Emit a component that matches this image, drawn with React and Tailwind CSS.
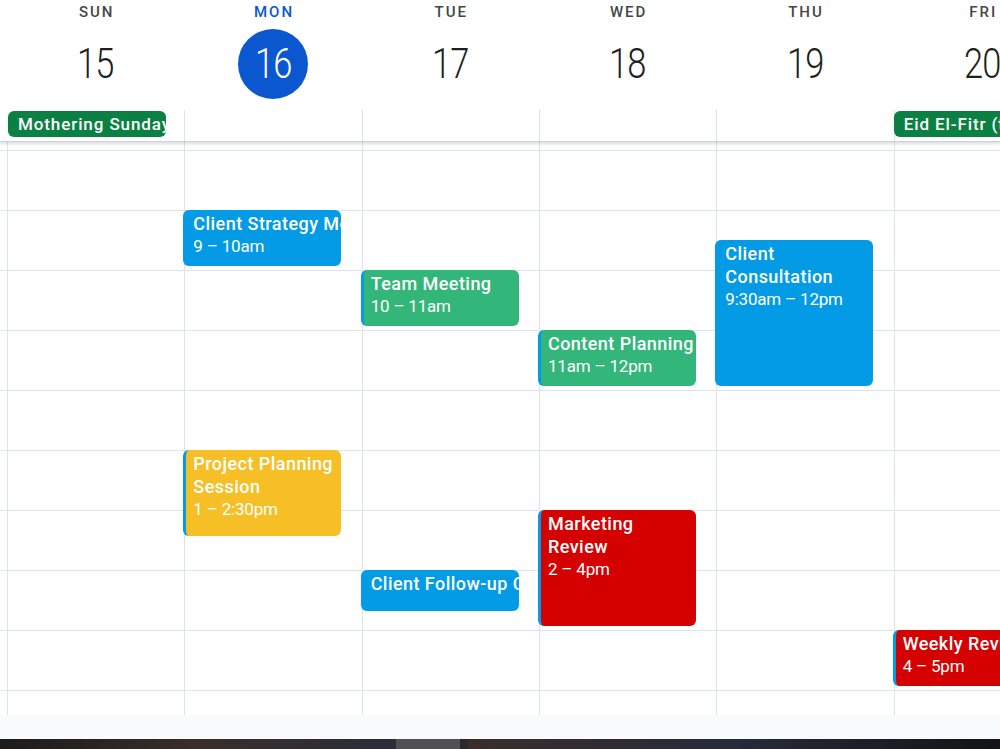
const days = [
  { label: "SUN", num: "15" },
  { label: "MON", num: "16", today: true },
  { label: "TUE", num: "17" },
  { label: "WED", num: "18" },
  { label: "THU", num: "19" },
  { label: "FRI", num: "20" },
];

const chips = {
  0: "Mothering Sunday",
  5: "Eid El-Fitr (tentative)",
};

const HOUR = 60;
const BASE = 68; // offset of 9am inside body

const events = {
  1: [
    { lines: ["Client Strategy Meeting"], time: "9 – 10am", start: 9, dur: 1, bg: "bg-[#039be5]" },
    { lines: ["Project Planning", "Session"], time: "1 – 2:30pm", start: 13, dur: 1.5, bg: "bg-[#f6bf26]" },
  ],
  2: [
    { lines: ["Team Meeting"], time: "10 – 11am", start: 10, dur: 1, bg: "bg-[#33b679]" },
    { lines: ["Client Follow-up Call"], time: null, start: 15, dur: 0.75, bg: "bg-[#039be5]" },
  ],
  3: [
    { lines: ["Content Planning"], time: "11am – 12pm", start: 11, dur: 1, bg: "bg-[#33b679]" },
    { lines: ["Marketing", "Review"], time: "2 – 4pm", start: 14, dur: 2, bg: "bg-[#d50000]" },
  ],
  4: [
    { lines: ["Client", "Consultation"], time: "9:30am – 12pm", start: 9.5, dur: 2.5, bg: "bg-[#039be5]" },
  ],
  5: [
    { lines: ["Weekly Review"], time: "4 – 5pm", start: 16, dur: 1, bg: "bg-[#d50000]" },
  ],
};

function Event({ ev }) {
  const top = BASE + (ev.start - 9) * HOUR;
  const height = ev.dur * HOUR - 4;
  return (
    <div
      className={`absolute left-[-2px] w-[158px] rounded-[6px] overflow-hidden border-l-[3px] border-[#039be5] pl-[7px] pt-[2px] text-white leading-[23px] ${ev.bg}`}
      style={{ top, height }}
    >
      {ev.lines.map((l) => (
        <div key={l} className="text-[18px] font-medium tracking-[0.45px] whitespace-nowrap overflow-hidden">
          {l}
        </div>
      ))}
      {ev.time && <div className="text-[17px] tracking-[-0.2px] whitespace-nowrap">{ev.time}</div>}
    </div>
  );
}

export default function App() {
  return (
    <div className="w-[1000px] h-[749px] overflow-hidden flex flex-col bg-[#f8fafd] font-['Roboto','Noto_Sans',sans-serif]">
      {/* Header */}
      <div className="relative z-10 h-[142px] shrink-0 bg-white border-b border-[#cfd2d6] shadow-[0_2px_3px_rgba(60,64,67,0.18)]">
        <div className="grid grid-cols-[repeat(6,177.33px)] pl-[7px] h-[110px]">
          {days.map((d) => (
            <div key={d.label} className="flex flex-col items-center">
              <div
                className={`h-[24px] pl-[2px] flex items-center text-[15px] font-medium tracking-[2px] ${
                  d.today ? "text-[#0b57d0]" : "text-[#444746]"
                }`}
              >
                {d.label}
              </div>
              <div
                className={`mt-[5px] w-[70px] h-[70px] rounded-full flex items-center justify-center ${
                  d.today ? "bg-[#0b57d0] text-white" : "text-[#1f1f1f]"
                }`}
              >
                <span className="text-[42px] font-light leading-none tracking-[-1px] scale-x-[0.82]">{d.num}</span>
              </div>
            </div>
          ))}
        </div>
        <div className="grid grid-cols-[repeat(6,177.33px)] pl-[7px] h-[31px]">
          {days.map((d, i) => (
            <div key={d.label} className={`pt-[1px] ${i > 0 ? "border-l border-[#dde3ea]" : ""}`}>
              {chips[i] && (
                <div
                  className={`${i === 0 ? "ml-[1px]" : "-ml-[1px]"} w-[158px] h-[26px] rounded-[6px] bg-[#0b8043] text-white text-[17px] font-medium tracking-[0.9px] leading-[27px] pl-[10px] whitespace-nowrap overflow-hidden`}
                >
                  {chips[i]}
                </div>
              )}
            </div>
          ))}
        </div>
      </div>

      {/* Body */}
      <div className="relative h-[573px] shrink-0 bg-white overflow-hidden">
        <div className="flex flex-col">
          <div className="h-[9px] border-b border-[#dde3ea]" />
          {Array.from({ length: 9 }).map((_, i) => (
            <div key={i} className="h-[60px] border-b border-[#dde3ea]" />
          ))}
        </div>
        <div className="absolute inset-0 grid grid-cols-[repeat(6,177.33px)] pl-[7px]">
          {days.map((d, i) => (
            <div key={d.label} className="relative border-l border-[#dde3ea]">
              {(events[i] || []).map((ev) => (
                <Event key={ev.lines[0]} ev={ev} />
              ))}
            </div>
          ))}
        </div>
      </div>

      {/* bottom strip */}
      <div className="h-[24px] shrink-0 bg-[#f8fafd]" />
      <div className="h-[10px] shrink-0 flex">
        <div className="w-[396px] bg-gradient-to-r from-[#1c1b1b] via-[#3a2e29] to-[#2a2d3a]" />
        <div className="w-[64px] bg-[#505055]" />
        <div className="w-[8px] bg-[#2a2a2e]" />
        <div className="flex-1 bg-gradient-to-r from-[#3a2d2b] via-[#272b3a] to-[#141416]" />
      </div>
    </div>
  );
}
